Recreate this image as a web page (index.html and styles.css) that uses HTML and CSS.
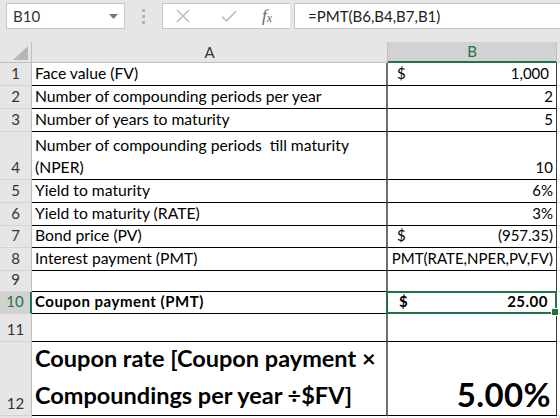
FILE: index.html
```html
<!DOCTYPE html>
<html lang="en">
<head>
    <meta charset="UTF-8">
    <title>Coupon rate</title>
    <link rel="stylesheet" href="styles.css">
</head>
<body>
<div class="topbar">
    <div class="namebox">
        <span>B10</span>
        <svg class="drop" width="9" height="5" viewBox="0 0 9 5"><path d="M0 0h9L4.5 5z" fill="#777"/></svg>
    </div>
    <div class="dots"><i></i><i></i><i></i></div>
    <div class="iconbox">
        <svg width="18" height="18" viewBox="0 0 18 18"><path d="M3 3l12 12M15 3L3 15" stroke="#bdbdbd" stroke-width="1.6" fill="none"/></svg>
        <svg width="18" height="18" viewBox="0 0 18 18"><path d="M2 9.5l4.5 4.5L16 4" stroke="#bdbdbd" stroke-width="1.6" fill="none"/></svg>
        <span class="fx">f<sub>x</sub></span>
    </div>
    <div class="formula">=PMT(B6,B4,B7,B1)</div>
</div>

<div class="sheet">
    <div class="hd corner"><svg width="15" height="14" viewBox="0 0 15 14"><path d="M15 0V14H0z" fill="#b6b6b6"/></svg></div>
    <div class="hd colhd">A</div>
    <div class="hd colhd sel">B</div>
    <div class="hd rest"></div>

    <div class="rh">1</div>
    <div class="ca">Face value (FV)</div>
    <div class="cb acc"><span>$</span><span>1,000</span></div>
    <div class="rest"></div>

    <div class="rh">2</div>
    <div class="ca">Number of compounding periods per year</div>
    <div class="cb num">2</div>
    <div class="rest"></div>

    <div class="rh">3</div>
    <div class="ca">Number of years to maturity</div>
    <div class="cb num">5</div>
    <div class="rest"></div>

    <div class="rh">4</div>
    <div class="ca">Number of compounding periods&nbsp; till maturity<br>(NPER)</div>
    <div class="cb num">10</div>
    <div class="rest"></div>

    <div class="rh">5</div>
    <div class="ca">Yield to maturity</div>
    <div class="cb num">6%</div>
    <div class="rest"></div>

    <div class="rh">6</div>
    <div class="ca">Yield to maturity (RATE)</div>
    <div class="cb num">3%</div>
    <div class="rest"></div>

    <div class="rh">7</div>
    <div class="ca">Bond price (PV)</div>
    <div class="cb acc neg"><span>$</span><span>(957.35)</span></div>
    <div class="rest"></div>

    <div class="rh">8</div>
    <div class="ca">Interest payment (PMT)</div>
    <div class="cb num">PMT(RATE,NPER,PV,FV)</div>
    <div class="rest"></div>

    <div class="rh">9</div>
    <div class="ca"></div>
    <div class="cb"></div>
    <div class="rest"></div>

    <div class="rh cur">10</div>
    <div class="ca bold">Coupon payment (PMT)</div>
    <div class="cb acc bold active"><span>$</span><span>25.00</span></div>
    <div class="rest"></div>

    <div class="rh">11</div>
    <div class="ca"></div>
    <div class="cb"></div>
    <div class="rest"></div>

    <div class="rh">12</div>
    <div class="ca big">Coupon rate [Coupon payment ×<br>Compoundings per year ÷$FV]</div>
    <div class="cb num huge">5.00%</div>
    <div class="rest"></div>

    <div class="rh foot"></div>
    <div class="foot"></div>
    <div class="foot"></div>
    <div class="foot"></div>
</div>
</body>
</html>
```

FILE: styles.css
```css
* {
    margin: 0;
    padding: 0;
    box-sizing: border-box;
}

body {
    width: 560px;
    height: 418px;
    overflow: hidden;
    background: #e6e6e6;
    font-family: Lato, "Open Sans", sans-serif;
    color: #000;
}

/* formula bar */
.topbar {
    height: 42px;
    display: flex;
    align-items: flex-start;
    padding-top: 3px;
}

.namebox {
    margin-left: 6px;
    width: 119px;
    height: 26px;
    background: #fff;
    border: 1px solid #c6c6c6;
    display: flex;
    align-items: center;
    justify-content: space-between;
    padding: 0 6px 0 6px;
    font-size: 15px;
    color: #333;
}

.dots {
    width: 37px;
    height: 26px;
    display: flex;
    flex-direction: column;
    align-items: center;
    justify-content: center;
    gap: 3px;
}

.dots i {
    width: 3px;
    height: 3px;
    background: #b4b4b4;
}

.iconbox {
    width: 128px;
    height: 26px;
    background: #fff;
    border: 1px solid #c6c6c6;
    border-right: 0;
    display: flex;
    align-items: center;
    padding-left: 11px;
    gap: 28px;
}

.fx {
    font-family: "Liberation Serif", serif;
    font-style: italic;
    font-size: 17px;
    color: #666;
    margin-left: -4px;
}

.fx sub {
    font-size: 12px;
    vertical-align: -1px;
}

.formula {
    flex: 1;
    margin-left: 4px;
    height: 26px;
    background: #fff;
    border: 1px solid #c6c6c6;
    border-right: 0;
    padding-left: 13px;
    font-size: 15px;
    line-height: 24px;
    color: #222;
}

/* sheet grid */
.sheet {
    display: grid;
    grid-template-columns: 32px 356px 169px 3px;
    grid-template-rows: 21px 23px 23px 23px 48px 23px 23px 22px 23px 21px 22px 28px 74px 2px;
    background: #fff;
    font-size: 15px;
}

.sheet > div {
    border-right: 1px solid #000;
    border-bottom: 1px solid #000;
    display: flex;
    align-items: flex-end;
    padding-bottom: 1px;
    white-space: nowrap;
    line-height: 22px;
}

.sheet > .hd {
    background: #e6e6e6;
    border-bottom-color: #bfbfbf;
    border-right-color: #bfbfbf;
    justify-content: center;
    align-items: center;
    color: #333;
    font-size: 15px;
}

.sheet > .corner {
    justify-content: flex-end;
    align-items: flex-end;
    padding: 0 3px 2px 0;
}

.sheet > .colhd.sel {
    background: #d2d2d2;
    color: #217346;
    border-bottom: 2px solid #217346;
}

.sheet > .hd.rest {
    border-right: 0;
}

.sheet > .rh {
    background: #e6e6e6;
    border-right-color: #bfbfbf;
    border-bottom-color: #d4d4d4;
    justify-content: center;
    color: #333;
    font-size: 15px;
}

.sheet > .rh.cur {
    background: #d2d2d2;
    color: #217346;
    border-right: 2px solid #217346;
}

.sheet > .ca {
    padding-left: 3px;
    border-right: 2px solid #6f6f6f;
    font-size: 15.7px;
}

.sheet > .cb {
    padding: 0 3px 1px 0;
    border-right-color: #3a3a3a;
}

.sheet > .num {
    justify-content: flex-end;
}

.sheet > .acc {
    justify-content: space-between;
    padding: 0 7px 1px 9px;
}

.sheet > .acc.neg {
    padding-right: 3px;
}

.sheet > .bold {
    font-weight: bold;
    font-size: 15px;
    letter-spacing: 0.5px;
}

.sheet > .active {
    position: relative;
    border: 2px solid #217346;
    margin: -1px 0 0 -2px;
    padding: 0 7px 0 11px;
}

.active::after {
    content: "";
    position: absolute;
    right: -4px;
    bottom: -4px;
    width: 6px;
    height: 6px;
    background: #217346;
    border: 1px solid #fff;
}

.sheet > .big {
    font-weight: bold;
    font-size: 23.5px;
    letter-spacing: 0;
    line-height: 37px;
    padding-bottom: 1px;
}

.sheet > .huge {
    font-weight: bold;
    font-size: 33px;
    letter-spacing: 0.4px;
    line-height: 40px;
    padding: 0 5px 1px 0;
}

.sheet > .rest {
    border-right: 0;
    border-bottom-color: #d4d4d4;
}

.sheet > .foot {
    border-bottom: 0;
    border-right-color: #d4d4d4;
}
```
